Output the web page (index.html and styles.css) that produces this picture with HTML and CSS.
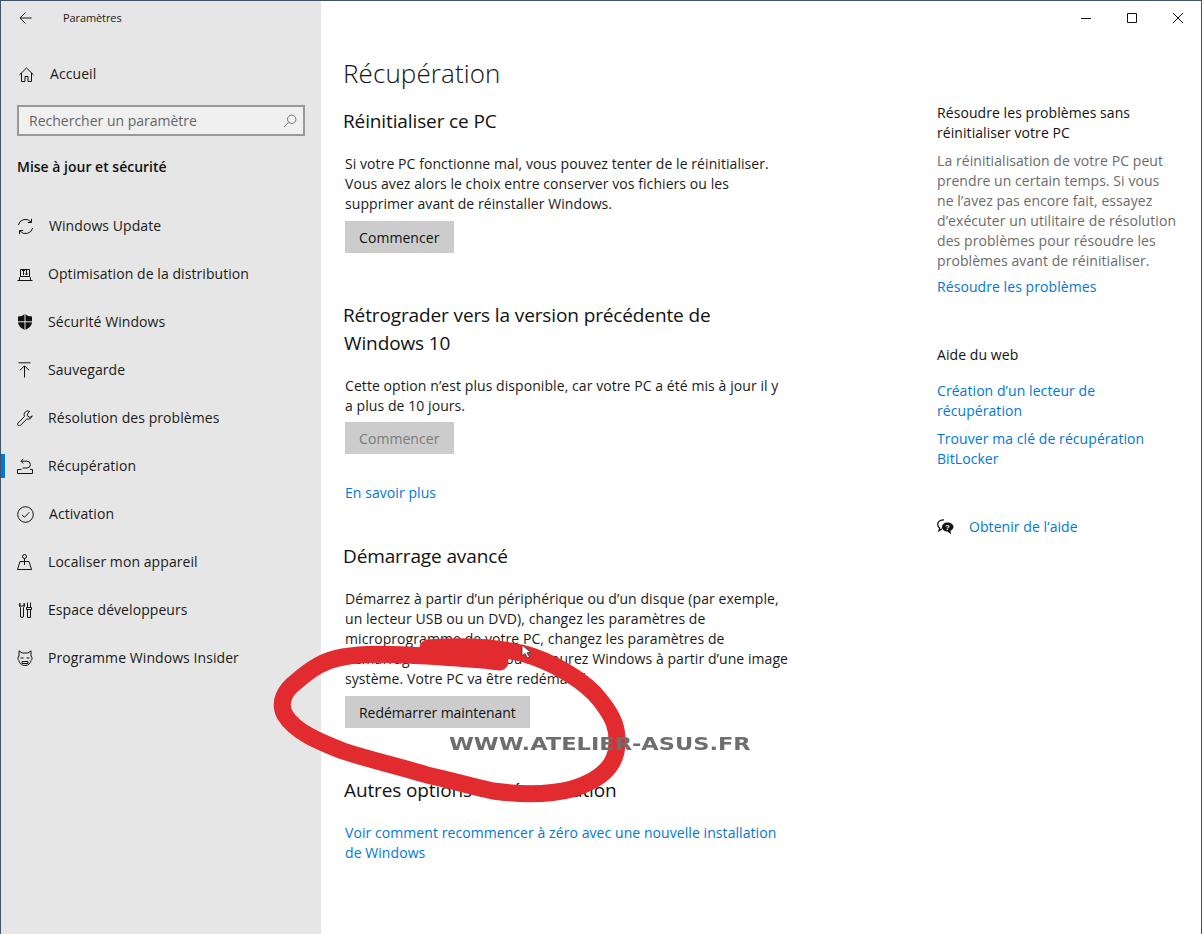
FILE: index.html
```html
<!DOCTYPE html>
<html lang="fr">
<head>
<meta charset="utf-8">
<title>Paramètres</title>
<link rel="stylesheet" href="styles.css">
</head>
<body>
<div class="window">
  <nav class="sidebar">
    <div class="titlebar">
      <svg class="back" viewBox="0 0 13 14" width="13" height="14"><path d="M12.500 7H1M6.500 1.500L1 7l5.500 5.500"/></svg>
      <span class="apptitle">Paramètres</span>
    </div>
    <a class="home">
      <svg class="ico" viewBox="0 0 15 15" width="15" height="15"><path d="M.5 7.800L7.500 1l7 6.800M2.500 6V14.500h3.500v-5h3v5h3.500V6"/></svg>
      <span>Accueil</span>
    </a>
    <div class="search">
      <span>Rechercher un paramètre</span>
      <svg class="ico" viewBox="0 0 14 14" width="14" height="14"><circle cx="8.700" cy="5.300" r="4.200"/><path d="M5.600 8.400L1 13"/></svg>
    </div>
    <h2 class="section">Mise à jour et sécurité</h2>
    <ul class="menu">
      <li class="item"><svg class="ico" viewBox="0 0 17 17" width="17" height="17"><path d="M1.300 7A7.300 7.300 0 0 1 14 4M15.700 10A7.300 7.300 0 0 1 3 13M14.500.8V4.500h-3.700M2.500 16.200V12.500h3.700"/></svg><span class="wide">Windows Update</span></li>
      <li class="item"><svg class="ico" viewBox="0 0 16 16" width="16" height="16"><path d="M.5 14.500h15M2.500 14.500v-3l1-1V3.500h9v7l1 1v3M3.500 10.500h9M6.500 9V3.500M5 5l1.500-1.500L8 5M9.500 3.500V9M8.200 7.500L9.500 9l1.300-1.500"/></svg><span>Optimisation de la distribution</span></li>
      <li class="item"><svg class="ico solid" viewBox="0 0 16 16" width="16" height="16"><path d="M8 0C6 1.700 3.500 2.500 1 2.500V8c0 3.500 3 6.300 7 8 4-1.700 7-4.500 7-8V2.500C12.500 2.500 10 1.700 8 0z"/><path class="cut" d="M8 0v16M1 7.800h14"/></svg><span>Sécurité Windows</span></li>
      <li class="item"><svg class="ico" viewBox="0 0 16 16" width="16" height="16"><path d="M1.500.8h12M7.500 15.500V4M3 8.300l4.500-4.500 4.500 4.500"/></svg><span>Sauvegarde</span></li>
      <li class="item"><svg class="ico" viewBox="0 0 16 16" width="16" height="16"><path d="M10.200.8a4.300 4.300 0 0 0-2.800 5.800L1 13a1.700 1.700 0 0 0 2.400 2.400L9.800 9a4.300 4.300 0 0 0 5.400-3.200L13 7.500l-2.800-1.800.8-2.800 1.700-1.500z"/></svg><span>Résolution des problèmes</span></li>
      <li class="item active"><svg class="ico" viewBox="0 0 16 16" width="16" height="16"><path d="M.5 15.500h15v-4h-2.500M.5 15.500v-4H4.500M4.300 3.200h5.700a3.300 3.300 0 0 1 0 6.800H5.500M6.300.8L4 3.200l2.300 2.300"/></svg><span>Récupération</span></li>
      <li class="item"><svg class="ico" viewBox="0 0 17 17" width="17" height="17"><circle cx="8.500" cy="8.500" r="7.800"/><path d="M5 8.800l2.500 2.500 4.700-5"/></svg><span class="wide">Activation</span></li>
      <li class="item"><svg class="ico" viewBox="0 0 16 16" width="16" height="16"><circle cx="7.500" cy="2.500" r="2"/><path d="M7.500 4.500V11M.5 15.500l2.500-8h9l2.500 8zM.5 15.500h14"/></svg><span>Localiser mon appareil</span></li>
      <li class="item"><svg class="ico" viewBox="0 0 16 16" width="16" height="16"><path d="M3 1.200C2 2 2 4.500 3.500 5.500V14a1.500 1.500 0 0 0 3 0V5.500C8 4.500 8 2 7 1.200V4H3zM10.500.5v5M13.500.5v5M9.500 5.500h5v2h-5zM10.500 7.500V15.500h3V7.500"/></svg><span>Espace développeurs</span></li>
      <li class="item"><svg class="ico" viewBox="0 0 16 16" width="16" height="16"><path d="M2 6V.8L5 3h6L14 .8V6M2 6C.6 7 .6 9.500 2 10.500M14 6c1.400 1 1.400 3.500 0 4.500M2 10.500C2.500 13 4 15.500 8 15.500s5.500-2.500 6-5M3.500 8h3M9.500 8h3M5 11.500h6v2H5z"/></svg><span>Programme Windows Insider</span></li>
    </ul>
  </nav>

  <main class="page">
    <div class="controls">
      <svg viewBox="0 0 10 10" width="10" height="10"><path d="M0 5.500h10"/></svg>
      <svg viewBox="0 0 10 10" width="10" height="10"><path d="M.5.500h9v9h-9z"/></svg>
      <svg viewBox="0 0 10 10" width="10" height="10"><path d="M0 0l10 10M10 0L0 10"/></svg>
    </div>
    <div class="columns">
      <section class="content">
        <h1>Récupération</h1>
        <h2 class="head first">Réinitialiser ce PC</h2>
        <p>Si votre PC fonctionne mal, vous pouvez tenter de le réinitialiser.<br>Vous avez alors le choix entre conserver vos fichiers ou les<br>supprimer avant de réinstaller Windows.</p>
        <button class="btn" type="button">Commencer</button>

        <h2 class="head second">Rétrograder vers la version précédente de<br><span class="indent">Windows 10</span></h2>
        <p>Cette option n’est plus disponible, car votre PC a été mis à jour il y<br>a plus de 10 jours.</p>
        <button class="btn off" type="button">Commencer</button>
        <a class="link more">En savoir plus</a>

        <h2 class="head third">Démarrage avancé</h2>
        <p>Démarrez à partir d’un périphérique ou d’un disque (par exemple,<br>un lecteur USB ou un DVD), changez les paramètres de<br>microprogramme de votre PC, changez les paramètres de<br>démarrage de Windows ou restaurez Windows à partir d’une image<br>système. Votre PC va être redémarré.</p>
        <button class="btn long" type="button">Redémarrer maintenant</button>

        <h2 class="head fourth">Autres options de récupération</h2>
        <a class="link block">Voir comment recommencer à zéro avec une nouvelle installation<br>de Windows</a>
      </section>
      <aside class="side">
        <h3>Résoudre les problèmes sans<br>réinitialiser votre PC</h3>
        <p class="muted">La réinitialisation de votre PC peut<br>prendre un certain temps. Si vous<br>ne l’avez pas encore fait, essayez<br>d’exécuter un utilitaire de résolution<br>des problèmes pour résoudre les<br>problèmes avant de réinitialiser.</p>
        <a class="link fix">Résoudre les problèmes</a>
        <h3 class="web">Aide du web</h3>
        <a class="link block gap1">Création d’un lecteur de<br>récupération</a>
        <a class="link block gap2">Trouver ma clé de récupération<br>BitLocker</a>
        <a class="help">
          <svg viewBox="0 0 17 16" width="17" height="16"><path class="line" d="M7 .8C3.200.8.700 2.800.700 5.500c0 1.500.8 2.700 2 3.500l-.7 2.700 3.200-1.900"/><path d="M10.500 3.500c-3 0-5.500 2-5.500 4.500s2.500 4.500 5.500 4.500l3.500 2.700-.5-3.500c1.800-.8 3-2.200 3-3.700 0-2.500-2.800-4.500-6-4.500z"/><text x="10.500" y="11" class="q">?</text></svg>
          <span class="link">Obtenir de l’aide</span>
        </a>
      </aside>
    </div>
  </main>

  <svg class="scribble" viewBox="0 0 1202 934" width="1202" height="934">
    <path d="M428 648C465 645 500 648 525 654C550 661 585 680 600 700C612 715 620 728 616 752C612 770 595 782 572 789C545 796 515 794 493 791C470 786 450 780 427 775C395 765 370 760 343 751C320 742 295 732 285 715C278 702 285 690 297 681C312 668 325 660 343 657C370 652 400 655 427 656C455 658 480 659 500 662"/>
  </svg>
  <svg class="cursor" viewBox="0 0 14 16" width="14" height="16"><path d="M1 1v11l3-2.500 2.500 4.500 2-1-2.500-4.300 4-.2z"/></svg>
  <span class="mark">WWW.ATELIER-ASUS.FR</span>
</div>
</body>
</html>
```

FILE: styles.css
```css
* { box-sizing: border-box; }
html, body { margin: 0; padding: 0; background: #fff; }
body { font-family: "Open Sans", "Noto Sans", sans-serif; font-size: 14px; line-height: 20px; letter-spacing: .07px; color: #1a1a1a; }
h1, h2, h3, p, ul { margin: 0; padding: 0; font-weight: 400; }
ul { list-style: none; }
a { display: inline-block; }

.window { position: relative; width: 1202px; height: 934px; display: flex; border: 1px solid #3f5468; border-bottom: 0; overflow: hidden; }

.sidebar { width: 320px; flex: none; background: #e6e6e6; height: 100%; padding-left: 16px; }
.titlebar { display: flex; align-items: center; height: 33px; padding-left: 2px; }
.back { fill: none; stroke: #1a1a1a; stroke-width: 1; }
.apptitle { margin-left: 31px; font-size: 11px; letter-spacing: -.1px; }
.home { display: flex; align-items: center; height: 48px; margin-top: 16px; padding-left: 2px; }
.home span { margin-left: 16px; }
.ico { fill: none; stroke: #111; stroke-width: 1; flex: none; }
.search { display: flex; align-items: center; justify-content: space-between; width: 288px; height: 31px; margin-top: 7px; padding: 0 6px 0 10px; background: #f0f0f0; border: 2px solid #999; color: #666; letter-spacing: 0; }
.search .ico { stroke: #777; }
.section { font-size: 14px; font-weight: 600; margin-top: 21px; color: #111; letter-spacing: 0; }
.menu { margin-top: 25px; margin-left: -16px; }
.item { position: relative; display: flex; align-items: center; height: 48px; padding-left: 16px; }
.item span { margin-left: 15px; }
.item.active::before { content: ""; position: absolute; left: 0; top: 12px; width: 4px; height: 24px; background: #0078d7; }
.solid { fill: #111; stroke: none; }
.solid .cut { fill: none; stroke: #e6e6e6; stroke-width: 1; }

.page { flex: 1; min-width: 0; }
.controls { display: flex; justify-content: flex-end; align-items: center; gap: 36px; height: 33px; padding-right: 18px; }
.controls svg { fill: none; stroke: #111; stroke-width: 1; }
.columns { display: flex; }
.content { width: 616px; padding-left: 23px; }
.side { padding-top: 69px; width: 262px; }

h1 { font-size: 26px; line-height: 36px; margin-top: 21px; margin-left: -1px; font-weight: 300; color: #111; letter-spacing: .1px; }
.head { font-size: 19px; line-height: 28px; color: #111; font-weight: 400; letter-spacing: -.12px; margin-left: -1px; }
.first { margin-top: 16px; }
.second { margin-top: 48px; }
.third { margin-top: 39px; }
.fourth { margin-top: 48px; margin-left: 0; }
.indent { margin-left: 1px; }
.content p { margin-top: 19px; margin-left: 1px; }
.btn { display: block; margin: 7px 0 0 1px; padding: 1px 14px 0; height: 32px; border: 0; background: #ccc; font: inherit; letter-spacing: inherit; color: #111; }
.btn.off { color: #7a7a7a; margin-top: 6px; }
.btn.long { letter-spacing: -.06px; }
.link { color: #0078d7; }
.more { margin: 29px 0 0 1px; }
.block { display: block; margin-left: 1px; }
.content .block { margin-top: 19px; }

.side h3 { font-size: 14px; color: #111; }
.muted { color: #6b6b6b; margin-top: 8px; }
.fix { margin-top: 6px; }
.web { margin-top: 48px; }
.side .block { margin-left: 0; }
.gap1 { margin-top: 16px; }
.gap2 { margin-top: 8px; }
.help { display: flex; align-items: center; margin-top: 48px; }
.help svg { fill: #111; stroke: none; }
.help .line { fill: none; stroke: #111; stroke-width: 1.300; }
.help .q { fill: #fff; font-size: 8px; font-weight: 700; text-anchor: middle; font-family: "Liberation Sans", sans-serif; }
.help .link { margin-left: 15px; }

.scribble { position: absolute; left: -1px; top: -1px; pointer-events: none; }
.scribble path { fill: none; stroke: #e22b2e; stroke-width: 17; stroke-linecap: round; stroke-linejoin: round; filter: blur(.6px); }
.cursor { position: absolute; left: 520px; top: 643px; fill: #fff; stroke: #333; stroke-width: .8; }
.mark { position: absolute; left: 448px; top: 732px; font-family: "DejaVu Sans", sans-serif; font-weight: 700; font-size: 18px; line-height: 22px; color: #6e6e6e; letter-spacing: 0; white-space: nowrap; transform: scaleX(1.25); transform-origin: left center; }
```
